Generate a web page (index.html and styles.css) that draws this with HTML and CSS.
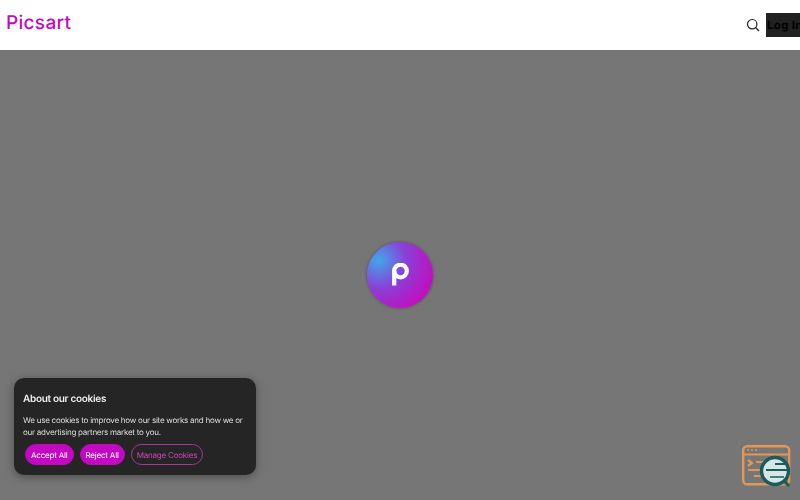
FILE: index.html
```html
<!DOCTYPE html>
<html>
<head>
<title>Picsart</title>
<link rel="stylesheet" href="styles.css">
</head>
<body>
<header class="topbar">
  <a class="logo">Picsart</a>
  <div class="topbar-right">
    <svg class="search-icon" width="14" height="14" viewBox="0 0 14 14">
      <circle cx="6.2" cy="6.2" r="4.7" fill="none" stroke="#222" stroke-width="1.2"/>
      <path d="M9.7 9.7L13 13" stroke="#222" stroke-width="1.3" fill="none"/>
    </svg>
    <button class="login">Log In</button>
  </div>
</header>
<main class="stage">
  <div class="loader">
    <svg width="20" height="24" viewBox="0 0 20 24">
      <circle cx="10.5" cy="8" r="6.3" fill="none" stroke="#fff" stroke-width="4.2"/>
      <path d="M4.2 8V22.5" stroke="#fff" stroke-width="4.2" fill="none"/>
    </svg>
  </div>
</main>
<section class="cookies">
  <h2 class="cookies-title">About our cookies</h2>
  <p class="cookies-text">We use cookies to improve how our site works and how we or our advertising partners market to you.</p>
  <div class="cookies-actions">
    <button class="pill pill-solid">Accept All</button>
    <button class="pill pill-solid">Reject All</button>
    <button class="pill pill-line">Manage Cookies</button>
  </div>
</section>
<svg class="help-widget" width="50" height="46" viewBox="0 0 50 46">
  <rect x="1.2" y="1.2" width="46" height="38" rx="4" fill="none" stroke="#e0975a" stroke-width="2.4"/>
  <path d="M1 9.5H47" stroke="#e0975a" stroke-width="2.2"/>
  <path d="M5 5H15" stroke="#e0975a" stroke-width="1.5" stroke-dasharray="2 2"/>
  <path d="M6 15l4 3-4 3M14 17H26M6 25H24M12 31H26" stroke="#e0975a" stroke-width="2.2" fill="none"/>
  <circle cx="33" cy="26" r="13.5" fill="#d6e6e4" stroke="#1d5a5e" stroke-width="3.4"/>
  <path d="M24 25H46M33 19H43" stroke="#1d5a5e" stroke-width="2"/>
  <path d="M28 32H42" stroke="#1d5a5e" stroke-width="1.5"/>
  <path d="M42 36l5 5" stroke="#1d5a5e" stroke-width="3"/>
</svg>
</body>
</html>
```

FILE: styles.css
```css
html, body {height:100%;}
body {margin:0;display:flex;flex-direction:column;overflow:hidden;background:#767676;font-family:Inter,sans-serif;text-rendering:geometricPrecision;}

.topbar {height:50px;flex:none;background:#fff;display:flex;justify-content:space-between;padding-left:6px;}
.logo {font-family:Inter,sans-serif;font-size:19px;font-weight:500;color:#c209c1;letter-spacing:0.3px;line-height:45px;}
.topbar-right {display:flex;align-items:center;width:54px;flex:none;}
.search-icon {margin-right:6px;flex:none;}
.login {flex:none;width:50px;height:24px;margin:0;padding:0 0 0 1px;border:0;background:#212121;color:#000;font-family:Inter,sans-serif;font-weight:700;font-size:11.5px;letter-spacing:0.3px;text-align:left;white-space:nowrap;text-rendering:geometricPrecision;}

.stage {flex:1;display:flex;align-items:center;justify-content:center;}
.loader {width:66px;height:66px;border-radius:50%;background:radial-gradient(circle at 18% 28%,#3fa8e8 0,#8a40d8 38%,#c010c0 78%);display:flex;align-items:center;justify-content:center;box-shadow:0 0 3px rgba(80,20,90,0.6);}

.cookies {position:fixed;left:14px;top:378px;width:226px;height:81px;padding:8px;background:#252525;border-radius:10px;box-shadow:0 2px 10px rgba(0,0,0,0.35);color:#eee;}
.cookies-title {margin:7px 0 0 1px;font-size:10px;line-height:13px;font-weight:600;letter-spacing:-0.3px;}
.cookies-text {margin:9px 0 0 1px;font-size:8px;line-height:11.5px;letter-spacing:-0.24px;color:#ddd;}
.cookies-actions {display:flex;gap:6px;margin:6px 0 0 3px;}
.pill {height:21px;padding:0 5px;border-radius:11px;font-family:Inter,sans-serif;font-size:8px;letter-spacing:-0.2px;border:1px solid #c209c1;white-space:nowrap;text-rendering:geometricPrecision;}
.pill-solid {background:#c209c1;color:#fff;}
.pill-line {background:transparent;color:#cc44bb;border-color:#a8389c;}

.help-widget {position:fixed;left:742px;top:445px;}
```
